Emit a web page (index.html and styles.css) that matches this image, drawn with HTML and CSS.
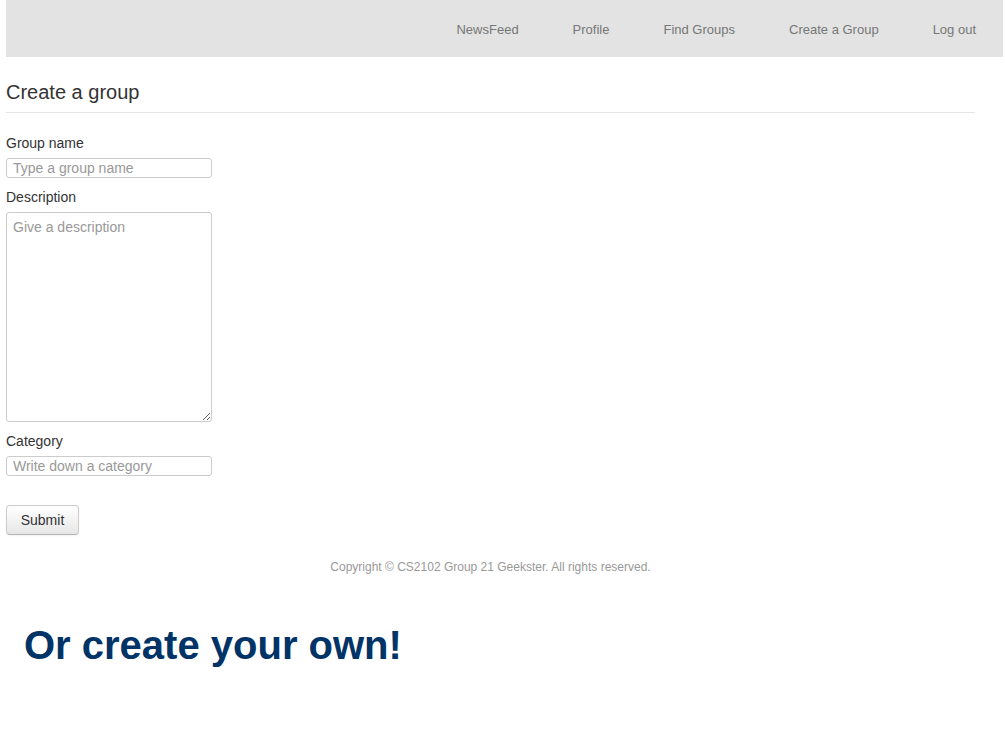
FILE: index.html
```html
<!DOCTYPE html>
<html>
<head>
<meta charset="utf-8">
<title>Create a group</title>
<link rel="stylesheet" href="styles.css">
</head>
<body>
<header class="navbar">
  <nav class="nav">
    <a class="nav-link" href="#">NewsFeed</a>
    <a class="nav-link" href="#">Profile</a>
    <a class="nav-link" href="#">Find Groups</a>
    <a class="nav-link" href="#">Create a Group</a>
    <a class="nav-link" href="#">Log out</a>
  </nav>
</header>
<main class="container">
  <h1 class="page-title">Create a group</h1>
  <form class="group-form">
    <label class="field-label" for="gname">Group name</label>
    <input class="field-input" id="gname" type="text" placeholder="Type a group name">
    <label class="field-label" for="gdesc">Description</label>
    <textarea class="field-textarea" id="gdesc" placeholder="Give a description"></textarea>
    <label class="field-label" for="gcat">Category</label>
    <input class="field-input" id="gcat" type="text" placeholder="Write down a category">
    <button class="btn" type="button">Submit</button>
  </form>
  <footer class="footer">Copyright © CS2102 Group 21 Geekster. All rights reserved.</footer>
</main>
<section class="promo">Or create your own!</section>
</body>
</html>
```
FILE: styles.css
```css
html, body {
  margin: 0;
  padding: 0;
  background: #ffffff;
}
body {
  font-family: "Liberation Sans", Arial, sans-serif;
  color: #333333;
}
.navbar {
  margin: 0 2px 0 6px;
  height: 57px;
  background: #e2e3e2;
}
.nav {
  display: flex;
  justify-content: flex-end;
  align-items: center;
  height: 57px;
  padding-top: 2px;
  box-sizing: border-box;
}
.nav-link {
  font-size: 13px;
  color: #777777;
  text-decoration: none;
  padding: 0 27px;
  line-height: 20px;
}
.container {
  margin-left: 6px;
  width: 969px;
}
.page-title {
  margin: 23px 0 0;
  padding-bottom: 8px;
  border-bottom: 1px solid #e5e5e5;
  font-size: 20px;
  line-height: 24px;
  font-weight: normal;
  color: #333333;
}
.group-form {
  display: flex;
  flex-direction: column;
  align-items: flex-start;
  padding-top: 20px;
}
.field-label {
  display: block;
  font-size: 14px;
  line-height: 20px;
  margin-bottom: 5px;
  color: #333333;
}
.field-input, .field-textarea {
  box-sizing: border-box;
  width: 206px;
  border: 1px solid #cccccc;
  border-radius: 3px;
  font-family: "Liberation Sans", Arial, sans-serif;
  font-size: 14px;
  color: #555555;
  margin: 0 0 9px;
  background: #ffffff;
}
.field-input {
  height: 20px;
  padding: 0 6px;
  line-height: 18px;
}
.field-textarea {
  height: 210px;
  padding: 4px 6px;
  line-height: 20px;
}
.field-input::placeholder, .field-textarea::placeholder {
  color: #999999;
}
.field-input + .btn {
  margin-top: 20px;
}
.btn {
  box-sizing: border-box;
  height: 30px;
  width: 73px;
  padding: 0;
  border: 1px solid #cccccc;
  border-bottom-color: #b3b3b3;
  border-radius: 4px;
  background: linear-gradient(#ffffff, #e6e6e6);
  font-family: "Liberation Sans", Arial, sans-serif;
  font-size: 14px;
  color: #333333;
  box-shadow: 0 1px 2px rgba(0,0,0,0.05);
}
.footer {
  margin-top: 24px;
  text-align: center;
  font-size: 12px;
  line-height: 16px;
  color: #999999;
}
.promo {
  margin-top: 46px;
  padding-left: 24px;
  font-size: 40px;
  line-height: 48px;
  font-weight: bold;
  color: #003366;
}
```
